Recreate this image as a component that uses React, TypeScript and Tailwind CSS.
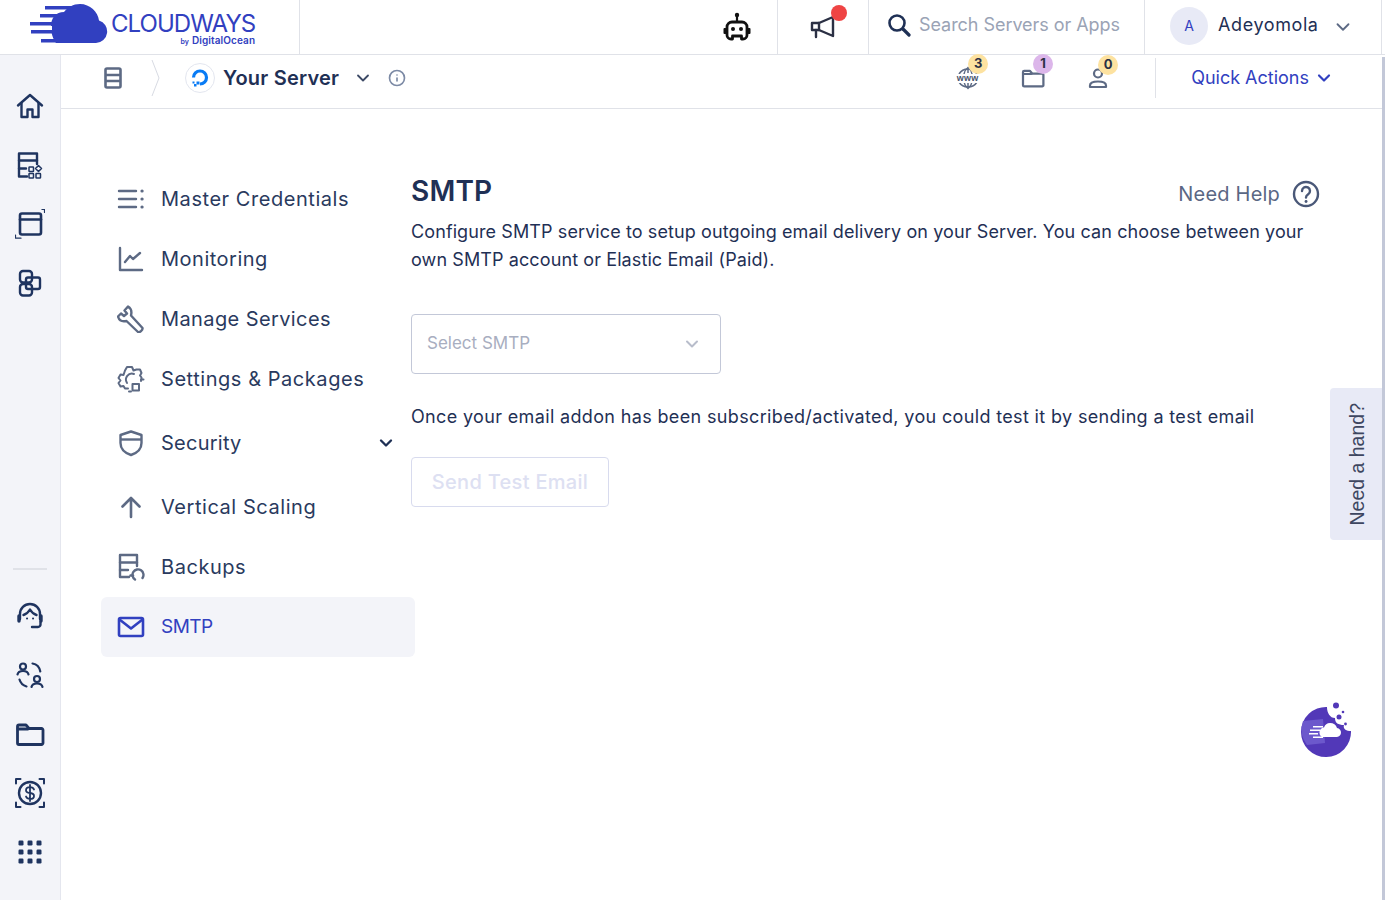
import React from "react";
import { ChevronDown, Info } from "lucide-react";

const railColor = "#1f3460";
const grayIcon = "#5d6a84";

type IconProps = { color?: string };

const Svg: React.FC<{ size?: number; color?: string; width?: number; children: React.ReactNode }> = ({
  size = 30,
  color = railColor,
  width = 2.4,
  children,
}) => (
  <svg width={size} height={size} viewBox="0 0 30 30" fill="none" stroke={color} strokeWidth={width} strokeLinecap="round" strokeLinejoin="round">
    {children}
  </svg>
);

const HomeIcon = () => (
  <Svg>
    <path d="M3 14.5 15 4l12 10.5" />
    <path d="M6.5 12V26h6v-7.5h5V26h6V12" />
  </Svg>
);
const ServerAppsIcon = () => (
  <Svg>
    <path d="M12 26.5H4V3.500h18V14" />
    <path d="M4 10.500h18M4 18.500h7" />
    <rect x="14" y="17" width="4.500" height="4.500" rx="0.6" strokeWidth={1.5} />
    <rect x="14" y="23.500" width="4.500" height="4.500" rx="0.6" strokeWidth={1.5} />
    <rect x="21" y="23.500" width="4.500" height="4.500" rx="0.6" strokeWidth={1.5} />
    <path d="M23.500 15.500l3 3-3 3-3-3z" strokeWidth={1.5} />
  </Svg>
);
const WindowIcon = () => (
  <Svg width={2.6}>
    <rect x="5" y="4.500" width="21" height="21" rx="2" />
    <path d="M5 10.500h21" />
    <path d="M27 0.500h2.500v3M0.500 26v3.200h5.500" strokeWidth={1.2} />
  </Svg>
);
const OverlapIcon = () => (
  <Svg>
    <rect x="5" y="3" width="12" height="11.500" rx="3" />
    <rect x="11" y="9.500" width="14" height="11.500" rx="2" />
    <rect x="5" y="16" width="12" height="11.500" rx="3" />
  </Svg>
);
const HeadsetIcon = () => (
  <Svg>
    <path d="M5 18v-5a10 10 0 0 1 20 0v5" />
    <path d="M4 15v5M26 15v5" strokeWidth={3.4} />
    <path d="M8.500 14c3-.8 5-3 6.500-5.500 1.500 2.500 3.500 4.700 6.500 5.500" />
    <path d="M25.500 21v2.500a2.500 2.500 0 0 1-2.500 2.500h-6" />
    <path d="M12 17.500h.1M18 17.500h.1" strokeWidth={2} />
  </Svg>
);
const SwapUsersIcon = () => (
  <Svg width={2.2}>
    <circle cx="8" cy="6.500" r="3" />
    <path d="M2.500 14.500c.5-2.500 2.500-3.500 5.500-3.500s5 1 5.500 3.500" />
    <circle cx="22" cy="19" r="3" />
    <path d="M16.500 27c.5-2.500 2.500-3.500 5.500-3.500s5 1 5.500 3.500" />
    <path d="M17.500 3.500c4 .7 7 3.500 7.800 8" />
    <path d="M4.500 19.500c1 3.500 3.500 6 7 7" />
  </Svg>
);
const FolderIcon: React.FC<{ size?: number; color?: string }> = ({ size = 30, color = railColor }) => (
  <Svg size={size} color={color} width={2.8}>
    <path d="M2.500 24V7.500A1.500 1.500 0 0 1 4 6h7l3 3.500h12.500A1.500 1.500 0 0 1 28 11v13a1.500 1.500 0 0 1-1.500 1.500H4A1.500 1.500 0 0 1 2.500 24z" />
    <path d="M3 10h10" />
  </Svg>
);
const DollarIcon = () => (
  <Svg>
    <circle cx="15" cy="15" r="11" />
    <path d="M19 11.500c-.5-1.500-2-2.300-4-2.300-2.300 0-4 1.200-4 3s1.700 2.500 4 2.800 4 1 4 2.900-1.700 3-4 3c-2 0-3.500-.9-4-2.400M15 7v16" strokeWidth={1.8} />
    <path d="M1 5.500V1h4.500M24.500 1H29v4.500M1 24.500V29h4.500M29 24.500V29h-4.500" strokeWidth={2} />
  </Svg>
);
const DotsIcon = () => (
  <svg width="30" height="30" viewBox="0 0 30 30" fill={railColor}>
    {[6, 15, 24].flatMap((y) =>
      [6, 15, 24].map((x) => <rect key={`${x}-${y}`} x={x - 2.5} y={y - 2.5} width="5" height="5" rx="1.2" />)
    )}
  </svg>
);

const Logo = () => (
  <svg width="78" height="44" viewBox="0 0 78 44" className="shrink-0">
    <path d="M26 43h40a11.500 11.500 0 0 0 3-22.500C68 12 60 4 50 4c-7 0-12 3-16 8-8 0-13 6-13 14 0 7 2 13 5 17z" fill="#3140c0" />
    <g fill="#3140c0">
      <rect x="15" y="6" width="26" height="3.5" />
      <rect x="10" y="14" width="24" height="3.5" />
      <rect x="0" y="22" width="26" height="3.5" />
      <rect x="1" y="30" width="28" height="3.5" />
      <rect x="11" y="39" width="20" height="3.5" />
    </g>
    <rect x="18" y="26" width="4" height="4" fill="#fff" />
  </svg>
);

const RobotIcon = () => (
  <svg width="28" height="30" viewBox="0 0 28 30" fill="none">
    <circle cx="14" cy="3" r="2.2" fill="#111" />
    <path d="M14 4v6" stroke="#111" strokeWidth="2.2" />
    <path d="M9 10h10a5 5 0 0 1 5 5v8a4 4 0 0 1-4 4h-1.500v-3h-9v3H8a4 4 0 0 1-4-4v-8a5 5 0 0 1 5-5z" stroke="#111" strokeWidth="2.8" strokeLinejoin="round" />
    <rect x="0.5" y="16" width="3" height="6" rx="1" fill="#111" />
    <rect x="24.5" y="16" width="3" height="6" rx="1" fill="#111" />
    <circle cx="10" cy="17" r="2" fill="#111" />
    <circle cx="18" cy="17" r="2" fill="#111" />
  </svg>
);

const SearchGlyph = () => (
  <svg width="24" height="24" viewBox="0 0 24 24" fill="none" stroke="#1f3055" strokeLinecap="round">
    <circle cx="10" cy="10" r="7.500" strokeWidth="2.6" />
    <path d="m16 16 6 6" strokeWidth="3.2" />
  </svg>
);

const MegaphoneIcon = () => (
  <svg width="28" height="28" viewBox="0 0 28 28" fill="none" stroke="#2b3044" strokeWidth="2.400" strokeLinejoin="round" strokeLinecap="round">
    <path d="M3 10h7l14-6v19l-14-6H3z" />
    <path d="M10 10v7M7 17v7" />
  </svg>
);

const ServerIcon = () => (
  <svg width="18" height="22" viewBox="0 0 18 22" fill="none" stroke={grayIcon} strokeWidth="2.600" strokeLinejoin="round">
    <rect x="1.500" y="1.500" width="15" height="19" rx="1.500" />
    <path d="M1.500 8h15M1.500 14h15" />
  </svg>
);

const DoLogo = () => (
  <div className="w-[30px] h-[30px] rounded-full border border-[#e3e6ef] flex items-center justify-center">
    <svg width="20" height="20" viewBox="0 0 20 20" fill="none">
      <path d="M3.500 9.500a6.500 6.500 0 1 1 6.500 6.500" stroke="#0a7cf5" strokeWidth="3.200" />
      <rect x="6.500" y="13.500" width="3" height="3" fill="#0a7cf5" />
      <rect x="4" y="16" width="2.500" height="2.500" fill="#0a7cf5" />
      <rect x="2.500" y="13.500" width="2" height="2" fill="#0a7cf5" />
    </svg>
  </div>
);

const WwwIcon = () => (
  <div className="relative w-[24px] h-[24px] flex items-center justify-center">
    <svg width="24" height="24" viewBox="0 0 24 24" fill="none" stroke={grayIcon} strokeWidth="1.500" className="absolute inset-0">
      <path d="M3 8a10.500 10.500 0 0 1 18 0M3 16a10.500 10.500 0 0 0 18 0" />
      <path d="M8 8c.5-3 2-5 4-6.500 2 1.500 3.500 3.500 4 6.500M8 16c.5 3 2 5 4 6.500 2-1.500 3.500-3.500 4-6.500M12 2v5M12 17v5" />
    </svg>
    <span className="relative text-[9px] font-bold text-[#4a556e] bg-white leading-[9px] tracking-[0.3px] font-['Liberation_Sans',sans-serif]">www</span>
  </div>
);

const UserIcon = () => (
  <svg width="20" height="22" viewBox="0 0 20 22" fill="none" stroke={grayIcon} strokeWidth="2.200" strokeLinejoin="round">
    <circle cx="10" cy="6.500" r="4" />
    <path d="M2 20v-1.500c0-2.500 3-4 8-4s8 1.500 8 4V20z" />
  </svg>
);

const ListIcon = ({ color = grayIcon }: IconProps) => (
  <svg width="28" height="28" viewBox="0 0 28 28" fill="none" stroke={color} strokeWidth="2.400" strokeLinecap="round">
    <path d="M2 6h17M2 14h17M2 22h17" />
    <path d="M25 6h.1M25 14h.1M25 22h.1" strokeWidth="3.2" />
  </svg>
);
const ChartIcon = ({ color = grayIcon }: IconProps) => (
  <svg width="28" height="28" viewBox="0 0 28 28" fill="none" stroke={color} strokeWidth="2.400" strokeLinecap="round" strokeLinejoin="round">
    <path d="M3 3v22h22" />
    <path d="M8 17l5-6 3 3 7-6" />
  </svg>
);
const WrenchIcon = ({ color = grayIcon }: IconProps) => (
  <svg width="28" height="28" viewBox="0 0 28 28" fill="none" stroke={color} strokeWidth="2.400" strokeLinejoin="round">
    <path d="M11 1.500 7.500 5.500l2.500 3-3 2.500-3-2.500L1 11.500c1 3.500 4 5.500 8.500 4.500l11.500 11c1.500 1 5-2 4.500-4L14 10.500c1-4-.5-7.500-3-9z" />
  </svg>
);
const GearIcon = ({ color = grayIcon }: IconProps) => (
  <svg width="28" height="28" viewBox="0 0 28 28" fill="none" stroke={color} strokeWidth="2" strokeLinecap="round" strokeLinejoin="round">
    <path d="M11 23.500H8l-1.500-2.500-3 .5-2-3.500 2-2.500-2-2.500 2-3.500 3 .5L8 5.500l2-3.500h5l1.500 3.500 3-1 3.500 0 1.500 3.500-1.500 2.500 1.500 2v2" />
    <path d="M10 18a6 6 0 0 1 7-9" />
    <rect x="15.500" y="19" width="6.500" height="6.500" />
    <path d="M24 16v-1.500h2.500M12 26.500h2" />
  </svg>
);
const ShieldIcon = ({ color = grayIcon }: IconProps) => (
  <svg width="28" height="28" viewBox="0 0 28 28" fill="none" stroke={color} strokeWidth="2.400" strokeLinejoin="round">
    <path d="M14 2.500 24.500 6v8c0 6-4.500 10-10.500 12C8 24 3.500 20 3.500 14V6z" />
    <path d="M4 10.500h20" />
  </svg>
);
const ArrowIcon = ({ color = grayIcon }: IconProps) => (
  <svg width="28" height="28" viewBox="0 0 28 28" fill="none" stroke={color} strokeWidth="2.600" strokeLinecap="round" strokeLinejoin="round">
    <path d="M14 24V5M5.500 13.500 14 5l8.500 8.500" />
  </svg>
);
const BackupIcon = ({ color = grayIcon }: IconProps) => (
  <svg width="28" height="28" viewBox="0 0 28 28" fill="none" stroke={color} strokeWidth="2.400" strokeLinecap="round" strokeLinejoin="round">
    <path d="M12 24H3V2h17v11" />
    <path d="M3 9.500h17M3 17h8" />
    <path d="M18 26.500a5.500 5.500 0 1 1 7.500-1.500" />
    <path d="M13.500 22.500h2.500" />
  </svg>
);
const MailIcon = ({ color = "#3140c0" }: IconProps) => (
  <svg width="28" height="28" viewBox="0 0 28 28" fill="none" stroke={color} strokeWidth="2.600" strokeLinejoin="round">
    <rect x="2" y="5" width="24" height="18" rx="1.5" />
    <path d="m2.500 6.500 11.500 9 11.500-9" />
  </svg>
);

const HelpIcon = () => (
  <svg width="28" height="28" viewBox="0 0 28 28" fill="none" stroke="#4a5878" strokeWidth="2.400" strokeLinecap="round">
    <circle cx="14" cy="14" r="12" />
    <path d="M10 11a4 4 0 1 1 6.200 3.300c-1.400.9-2.200 1.700-2.200 3.200" />
    <path d="M14 21.500h.1" strokeWidth="2.800" />
  </svg>
);

const Bubble = () => (
  <svg width="56" height="56" viewBox="0 0 56 56">
    <path d="M29 6A25 25 0 1 0 53 30c-6 0-8-3-7-6-6 0-9-2-9-7-5 0-8-5-8-11z" fill="#5238b8" />
    <path d="M5 20a25 25 0 0 0 4 24l18-2-2-24z" fill="#6c58cc" />
    <path d="M24 36h14a4.500 4.500 0 0 0 1-9c-1-3.500-3.500-5-7-5-3 0-5 1.500-6 4.500-2.500 0-4.500 2.500-4.500 5 0 2 1 3.500 2.500 4.500z" fill="#fff" />
    <g fill="#fff">
      <rect x="15" y="25" width="10" height="1.5" />
      <rect x="12" y="28.500" width="10" height="1.5" />
      <rect x="11" y="32" width="9" height="1.5" />
      <rect x="15" y="35.500" width="10" height="1.5" />
    </g>
    <g fill="#5238b8">
      <circle cx="38" cy="4.500" r="3" />
      <circle cx="41" cy="16" r="2.500" />
      <circle cx="45" cy="11" r="1.300" />
      <circle cx="47.500" cy="23" r="1.400" />
    </g>
  </svg>
);

const menu = [
  { label: "Master Credentials", Icon: ListIcon, h: "h-[60px]", track: "tracking-[0.55px]" },
  { label: "Monitoring", Icon: ChartIcon, h: "h-[60px]", track: "tracking-[0.5px]" },
  { label: "Manage Services", Icon: WrenchIcon, h: "h-[60px]", track: "tracking-[0.4px]" },
  { label: "Settings & Packages", Icon: GearIcon, h: "h-[60px]", track: "tracking-[0.55px]" },
  { label: "Security", Icon: ShieldIcon, h: "h-[68px]", track: "tracking-[0.25px]", arrow: true },
  { label: "Vertical Scaling", Icon: ArrowIcon, h: "h-[60px]", track: "tracking-[0.55px]" },
  { label: "Backups", Icon: BackupIcon, h: "h-[60px]", track: "tracking-[0.55px]" },
];

const RailButton: React.FC<{ children: React.ReactNode }> = ({ children }) => (
  <div className="h-[59px] flex items-center justify-center">{children}</div>
);

const Counter: React.FC<{ value: string; bg: string; children: React.ReactNode }> = ({ value, bg, children }) => (
  <div className="relative w-[65px] flex justify-center">
    {children}
    <span className={`absolute -top-[12px] left-[33px] w-[20px] h-[20px] rounded-full flex items-center justify-center text-[13px] font-bold text-[#2b3044] ${bg}`}>
      {value}
    </span>
  </div>
);

export default function App() {
  return (
    <div className="relative h-screen overflow-hidden bg-white flex flex-col text-[#1f3055] font-['Inter','Liberation_Sans',sans-serif]">
      <header className="h-[55px] shrink-0 flex border-b border-[#e0e2e8] pr-[3px]">
        <div className="w-[300px] border-r border-[#e0e2e8] pl-[30px] flex">
          <Logo />
          <div className="ml-[3px] flex flex-col items-end text-[#3140c0]">
            <span className="text-[24px] leading-[22px] mt-[13px] tracking-[-0.95px]">CLOUDWAYS</span>
            <span className="text-[10px] leading-[10px] font-semibold tracking-[0.1px]"><span className="text-[7px] mr-[3px]">by</span>DigitalOcean</span>
          </div>
        </div>
        <div className="flex-1 flex justify-end items-center pr-[26px] border-r border-[#e0e2e8]">
          <RobotIcon />
        </div>
        <div className="relative w-[91px] flex items-center justify-center border-r border-[#e0e2e8]">
          <MegaphoneIcon />
          <span className="absolute left-[53px] top-[5px] w-[16px] h-[16px] rounded-full bg-[#ef4444]" />
        </div>
        <div className="w-[276px] flex items-center pl-[18px] pb-[5px] border-r border-[#e0e2e8]">
          <SearchGlyph />
          <span className="ml-[8px] text-[18px] text-[#9aa3b5] tracking-[-0.05px]">Search Servers or Apps</span>
        </div>
        <div className="w-[237px] flex items-center pl-[25px] pb-[3px] border-r border-[#e0e2e8]">
          <div className="w-[38px] h-[38px] rounded-full bg-[#e8eaf6] flex items-center justify-center text-[14px] text-[#3140c0]">A</div>
          <span className="ml-[10px] mb-[2px] text-[18px] text-[#1f3055] tracking-[0.6px]">Adeyomola</span>
          <ChevronDown size={22} color="#5d6a84" className="ml-[13px] mt-[3px]" />
        </div>
      </header>

      <div className="flex-1 flex min-h-0">
        <aside className="w-[61px] shrink-0 bg-[#f3f4f9] border-r border-[#e4e6ee] flex flex-col pt-[21px] pb-[19px]">
          <RailButton><HomeIcon /></RailButton>
          <RailButton><ServerAppsIcon /></RailButton>
          <RailButton><WindowIcon /></RailButton>
          <RailButton><OverlapIcon /></RailButton>
          <div className="mt-auto mx-[13px] h-[2px] bg-[#e0e2e8] mb-[16px]" />
          <RailButton><HeadsetIcon /></RailButton>
          <RailButton><SwapUsersIcon /></RailButton>
          <RailButton><FolderIcon /></RailButton>
          <RailButton><DollarIcon /></RailButton>
          <RailButton><DotsIcon /></RailButton>
        </aside>

        <div className="flex-1 min-w-0 flex">
          <div className="flex-1 min-w-0 flex flex-col">
            <div className="h-[54px] shrink-0 flex items-center border-b border-[#e0e2e8] pb-[7px]">
              <div className="ml-[43px]"><ServerIcon /></div>
              <svg width="10" height="40" viewBox="0 0 10 40" fill="none" stroke="#d8dbe3" className="ml-[29px]">
                <path d="M1 2l7 18-7 18" />
              </svg>
              <div className="ml-[24px]"><DoLogo /></div>
              <span className="ml-[8px] text-[20px] font-semibold text-[#1f3055] tracking-[0.2px]">Your Server</span>
              <ChevronDown size={20} color="#3d4a66" strokeWidth={2.200} className="ml-[14px]" />
              <Info size={18} color="#7c8aa5" strokeWidth={2.200} className="ml-[15px]" />
              <div className="ml-auto flex items-center">
                <Counter value="3" bg="bg-[#fde2a0]"><WwwIcon /></Counter>
                <Counter value="1" bg="bg-[#dcb6ea]"><FolderIcon size={24} color={grayIcon} /></Counter>
                <Counter value="0" bg="bg-[#fde2a0]"><UserIcon /></Counter>
                <div className="ml-[25px] w-px h-[40px] bg-[#e0e2e8]" />
                <span className="ml-[35px] mb-[1px] text-[18px] text-[#3140c0]">Quick Actions</span>
                <ChevronDown size={20} color="#3140c0" strokeWidth={2.600} className="ml-[5px] mr-[48px]" />
              </div>
            </div>

            <div className="flex-1 flex min-w-0 pt-[60px] pl-[40px]">
              <nav className="w-[314px] shrink-0">
                {menu.map(({ label, Icon, h, track, arrow }) => (
                  <div key={label} className={`${h} flex items-center pl-[16px] pr-[19px]`}>
                    <Icon />
                    <span className={`ml-[16px] text-[20px] text-[#2a3a5e] ${track}`}>{label}</span>
                    {arrow && <ChevronDown size={20} color="#1f3055" strokeWidth={2.800} className="ml-auto" />}
                  </div>
                ))}
                <div className="h-[60px] flex items-center pl-[16px] rounded-md bg-[#f3f4f9]">
                  <MailIcon />
                  <span className="ml-[16px] pt-[1px] text-[19px] text-[#3140c0] tracking-[-0.5px]">SMTP</span>
                </div>
              </nav>

              <main className="-ml-[4px] w-[909px] shrink-0">
                <div className="h-[44px] flex items-center justify-between">
                  <h1 className="text-[28px] font-semibold text-[#1f3055] tracking-[0.2px]">SMTP</h1>
                  <div className="flex items-center mt-[6px]">
                    <span className="text-[20px] text-[#5a6784] tracking-[0.2px]">Need Help</span>
                    <span className="ml-[12px]"><HelpIcon /></span>
                  </div>
                </div>
                <p className="mt-[5px] text-[18px] leading-[28px] text-[#1f3055] tracking-[0.1px]">
                  Configure SMTP service to setup outgoing email delivery on your Server. You can choose between your own SMTP account or Elastic Email (Paid).
                </p>
                <div className="mt-[40px] w-[310px] h-[60px] rounded border border-[#c3c8d8] flex items-center justify-between pl-[15px] pr-[18px]">
                  <span className="text-[17px] text-[#a8aec0]">Select SMTP</span>
                  <ChevronDown size={20} color="#b8bdcb" strokeWidth={2.400} />
                </div>
                <p className="mt-[29px] text-[18px] leading-[28px] text-[#1f3055] tracking-[0.35px]">
                  Once your email addon has been subscribed/activated, you could test it by sending a test email
                </p>
                <button className="mt-[26px] w-[198px] h-[50px] rounded border border-[#d8dbee] text-[20px] font-medium text-[#dde0f2] tracking-[0.3px]">
                  Send Test Email
                </button>
              </main>
            </div>
          </div>
          <div className="w-[3px] shrink-0 mt-[2px] bg-[#c3c8d8]" />
        </div>
      </div>

      <div className="absolute left-[1330px] top-[388px] w-[52px] h-[152px] rounded-l bg-[#e8eaf6] flex items-center justify-center">
        <span className="ml-[4px] [writing-mode:vertical-rl] rotate-180 text-[19.5px] text-[#3d4660] font-['Liberation_Sans',sans-serif]">Need a hand?</span>
      </div>
      <div className="absolute left-[1298px] top-[701px]">
        <Bubble />
      </div>
    </div>
  );
}
